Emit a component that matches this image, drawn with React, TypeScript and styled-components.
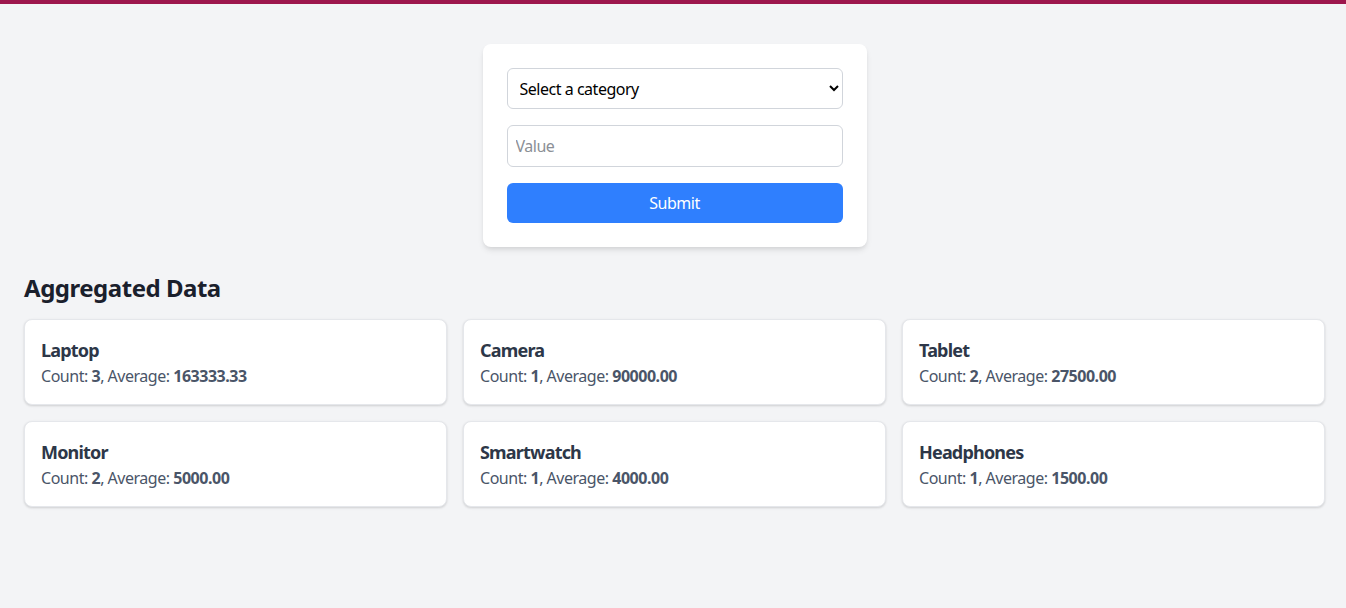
import React from "react";
import styled, { createGlobalStyle } from "styled-components";

const Global = createGlobalStyle`
  html, body { margin: 0; padding: 0; }
  body {
    background: #f3f4f6;
    font-family: "Segoe UI", "Noto Sans", "Open Sans", sans-serif;
    letter-spacing: -0.03em;
    color: #1a202c;
  }
  * { box-sizing: border-box; }
`;

const TopBar = styled.div`
  height: 4px;
  background: #9d174d;
`;

const Main = styled.main`
  padding: 40px 21px 40px 24px;
`;

const FormCard = styled.form`
  width: 384px;
  margin: 0 auto;
  background: #ffffff;
  border-radius: 8px;
  padding: 24px;
  box-shadow: 0 4px 6px -1px rgba(0, 0, 0, 0.1), 0 2px 4px -1px rgba(0, 0, 0, 0.06);
  display: flex;
  flex-direction: column;
  gap: 16px;
`;

const Select = styled.select`
  height: 41px;
  width: 100%;
  padding: 0 8px;
  font-family: inherit;
  letter-spacing: inherit;
  font-size: 16px;
  color: #000;
  background: #fff;
  border: 1px solid #d1d5db;
  border-radius: 6px;
`;

const Input = styled.input`
  height: 42px;
  width: 100%;
  padding: 0 8px;
  font-family: inherit;
  letter-spacing: inherit;
  font-size: 16px;
  background: #fff;
  border: 1px solid #d1d5db;
  border-radius: 6px;
  &::placeholder { color: #8b8f96; }
`;

const Button = styled.button`
  height: 40px;
  width: 100%;
  border: none;
  border-radius: 6px;
  background: #2f7ffe;
  color: #fff;
  font-family: inherit;
  letter-spacing: inherit;
  font-size: 16px;
`;

const Heading = styled.h2`
  margin: 25px 0 15px;
  font-size: 24px;
  line-height: 32px;
  font-weight: 700;
  color: #1a202c;
`;

const Grid = styled.div`
  display: grid;
  grid-template-columns: repeat(3, 1fr);
  gap: 16px;
`;

const Card = styled.div`
  background: #fff;
  border: 1px solid #e5e7eb;
  border-radius: 8px;
  padding: 16px;
  box-shadow: 0 1px 3px rgba(0, 0, 0, 0.1), 0 1px 2px rgba(0, 0, 0, 0.06);
`;

const Title = styled.h3`
  margin: 0;
  font-size: 18px;
  line-height: 28px;
  font-weight: 700;
  letter-spacing: -0.045em;
  color: #2d3748;
`;

const Stats = styled.p`
  margin: 0;
  font-size: 16px;
  line-height: 24px;
  color: #4a5568;
  b { font-weight: 700; }
`;

const data = [
  { name: "Laptop", count: 3, avg: "163333.33" },
  { name: "Camera", count: 1, avg: "90000.00" },
  { name: "Tablet", count: 2, avg: "27500.00" },
  { name: "Monitor", count: 2, avg: "5000.00" },
  { name: "Smartwatch", count: 1, avg: "4000.00" },
  { name: "Headphones", count: 1, avg: "1500.00" },
];

export default function App() {
  return (
    <>
      <Global />
      <TopBar />
      <Main>
        <FormCard onSubmit={(e) => e.preventDefault()}>
          <Select defaultValue="">
            <option value="">Select a category</option>
            <option>Laptop</option>
            <option>Camera</option>
          </Select>
          <Input placeholder="Value" />
          <Button type="submit">Submit</Button>
        </FormCard>
        <Heading>Aggregated Data</Heading>
        <Grid>
          {data.map((d) => (
            <Card key={d.name}>
              <Title>{d.name}</Title>
              <Stats>
                Count: <b>{d.count}</b>, Average: <b>{d.avg}</b>
              </Stats>
            </Card>
          ))}
        </Grid>
      </Main>
    </>
  );
}
